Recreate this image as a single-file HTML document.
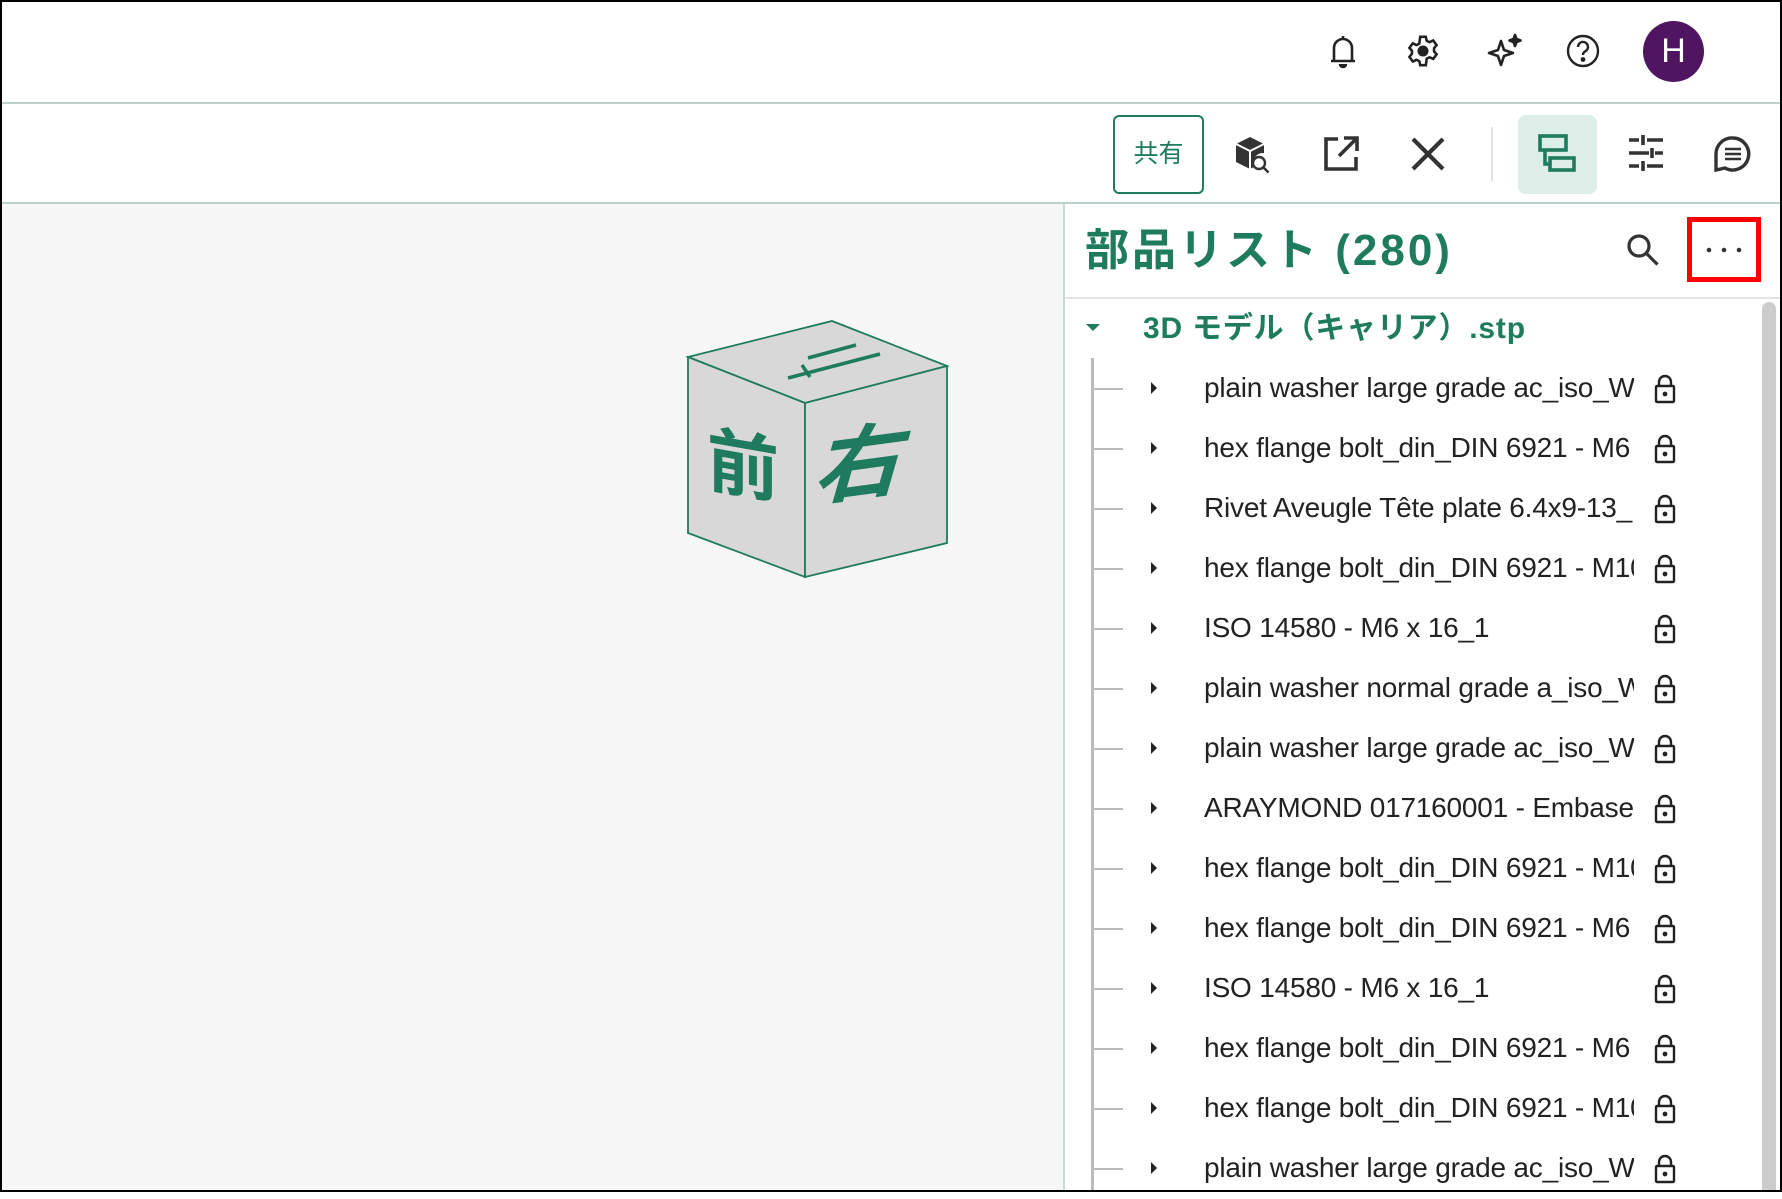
<!DOCTYPE html>
<html><head><meta charset="utf-8"><style>
*{margin:0;padding:0;box-sizing:border-box}
body{width:1782px;height:1192px;overflow:hidden;background:#fff;font-family:"Liberation Sans","Noto Sans CJK JP",sans-serif;position:relative}
.frame{position:absolute;left:0;top:0;width:1782px;height:1192px;border:2px solid #000;z-index:10;pointer-events:none}
.abs{position:absolute}
.hl{position:absolute;left:0;width:1782px;height:2px;background:#b9d3cb}
svg{position:absolute;overflow:visible}
.row{position:absolute;left:1063px;width:700px;height:60px}
.row .dash{position:absolute;left:30px;top:29px;width:30px;height:2px;background:#bbb}
.row .car{position:absolute;left:88px;top:23px;width:0;height:0;border-top:6px solid transparent;border-bottom:6px solid transparent;border-left:6px solid #222}
.row .t{position:absolute;left:141px;top:13px;width:430px;overflow:hidden;white-space:nowrap;font-size:28px;color:#222;letter-spacing:-0.2px}
.row svg{left:590px;top:15px}
</style></head><body>
<div class="frame"></div>
<div class="hl" style="top:102px"></div>
<div class="hl" style="top:202px"></div>
<svg style="left:1328px;top:33px" width="30" height="36" viewBox="0 0 30 36" fill="none" stroke="#222" stroke-width="2.6"><path d="M6 27V15a9 9 0 0 1 18 0v12M3 28h24M15 3v3"/><path d="M12 31a3 3 0 0 0 6 0" fill="#222"/></svg>
<svg style="left:1406px;top:34px" width="34" height="34" viewBox="0 0 24 24" fill="none" stroke="#222" stroke-width="1.8"><path d="M10 2h4l.6 2.8 2 1 2.6-1.2 2.4 3.2-1.8 2.2v2.2l1.8 2.2-2.4 3.2-2.6-1.2-2 1L14 22h-4l-.6-2.8-2-1-2.6 1.2-2.4-3.2 1.8-2.2v-2.2L2.4 9.8l2.4-3.2 2.6 1.2 2-1z"/><circle cx="12" cy="12" r="3" fill="#222"/></svg>
<svg style="left:1487px;top:33px" width="36" height="36" viewBox="0 0 36 36" fill="none" stroke="#222" stroke-width="2.6" stroke-linejoin="round"><path d="M14 8l3 9 9 3-9 3-3 9-3-9-9-3 9-3z"/><path d="M28 2l1.5 4 4 1.5-4 1.5L28 13l-1.5-4-4-1.5 4-1.5z" fill="#222"/></svg>
<svg style="left:1566px;top:34px" width="34" height="34" viewBox="0 0 34 34" fill="none" stroke="#222" stroke-width="2.4"><circle cx="17" cy="17" r="15"/><path d="M12 13a5 5 0 1 1 7 4.5c-1.5.8-2 1.6-2 3.5"/><circle cx="17" cy="25.5" r="1.2" fill="#222"/></svg>
<div class="abs" style="left:1643px;top:21px;width:61px;height:61px;border-radius:50%;background:#4f1560;color:#fff;font-size:34px;text-align:center;line-height:61px">H</div>
<div class="abs" style="left:1113px;top:115px;width:91px;height:79px;border:2px solid #1e7b5e;border-radius:6px;color:#1e7b5e;font-size:25px;text-align:center;line-height:75px">共有</div>
<svg style="left:1234px;top:135px" width="40" height="42" viewBox="0 0 40 42"><path d="M16 2l14 7v9a10 10 0 0 0-10 14l-4 2L2 27V9z" fill="#333"/><path d="M2 9l14 7 14-7M16 16v18" stroke="#fff" stroke-width="2" fill="none"/><circle cx="25" cy="28" r="6" fill="none" stroke="#333" stroke-width="2.4"/><path d="M29.5 32.5l5 5" stroke="#333" stroke-width="2.6"/></svg>
<svg style="left:1322px;top:135px" width="38" height="38" viewBox="0 0 38 38" fill="none" stroke="#333" stroke-width="3.6"><path d="M16 4H4v30h30V22"/><path d="M22 3h13v13M35 3L17 21"/></svg>
<svg style="left:1410px;top:136px" width="36" height="36" viewBox="0 0 36 36" stroke="#333" stroke-width="4.2"><path d="M3 3l30 30M33 3L3 33"/></svg>
<div class="abs" style="left:1491px;top:127px;width:2px;height:54px;background:#e3e3e3"></div>
<div class="abs" style="left:1518px;top:115px;width:79px;height:79px;border-radius:8px;background:#ddeee8"></div>
<svg style="left:1538px;top:134px" width="40" height="40" viewBox="0 0 40 40" fill="none" stroke="#1e7b5e" stroke-width="3.6"><rect x="2" y="2" width="26" height="14"/><rect x="12" y="24" width="24" height="12"/><path d="M7 16v14h5"/></svg>
<svg style="left:1627px;top:134px" width="38" height="38" viewBox="0 0 38 38" stroke="#333" stroke-width="3.6"><path d="M2 6h10M20 6h16M2 19h20M28 19h8M2 32h10M20 32h16M16 1v10M25 14v10M16 27v10"/></svg>
<svg style="left:1714px;top:136px" width="38" height="36" viewBox="0 0 38 36" fill="none" stroke="#333" stroke-width="3.4"><path d="M19 2a16 16 0 1 1-8 30L2 34V18A16 16 0 0 1 19 2z"/><path d="M11 13h16M11 18h16M11 23h16" stroke-width="2.6"/></svg>
<div class="abs" style="left:2px;top:204px;width:1061px;height:986px;background:#f7f7f7"></div>
<svg style="left:0;top:0" width="1782" height="1192">
<polygon points="688,357 832,321 947,366 805,403" fill="#d8d8d8" stroke="#1e7b5e" stroke-width="1.8"/>
<polygon points="688,357 805,403 805,577 688,533" fill="#d8d8d8" stroke="#1e7b5e" stroke-width="1.8"/>
<polygon points="805,403 947,366 947,543 805,577" fill="#d8d8d8" stroke="#1e7b5e" stroke-width="1.8"/>
<text x="707" y="485" font-size="72" fill="#1e7b5e" font-weight="bold" font-family="Noto Sans CJK JP,sans-serif" transform="skewY(10) translate(0,-125)">前</text>
<text x="825" y="505" font-size="84" fill="#1e7b5e" font-weight="bold" font-family="Noto Sans CJK JP,sans-serif" transform="skewX(-16) skewY(-8) translate(130,128)">右</text>
<path d="M788 378l92-24M802 365l8 12M808 358l48-13" stroke="#1e7b5e" stroke-width="3.5" fill="none"/>
</svg>
<div class="abs" style="left:1063px;top:204px;width:2px;height:986px;background:#c7dcd5"></div>
<div class="abs" style="left:1065px;top:297px;width:715px;height:2px;background:#e4e4e4"></div>
<div class="abs" style="left:1085px;top:214px;font-size:44px;color:#1e7b5e;font-weight:bold;letter-spacing:3px">部品リスト (280)</div>
<svg style="left:1626px;top:233px" width="34" height="34" viewBox="0 0 34 34" fill="none" stroke="#333" stroke-width="3.2"><circle cx="13" cy="13" r="10"/><path d="M20.5 20.5l11 11"/></svg>
<div class="abs" style="left:1687px;top:217px;width:74px;height:65px;border:5px solid #f00"></div>
<svg style="left:1706px;top:247px" width="36" height="6"><circle cx="3" cy="3" r="2.3" fill="#333"/><circle cx="18" cy="3" r="2.3" fill="#333"/><circle cx="33" cy="3" r="2.3" fill="#333"/></svg>
<div class="abs" style="left:1762px;top:302px;width:14px;height:888px;background:#ccc;border-radius:7px 7px 0 0"></div>
<div class="abs" style="left:1086px;top:324px;border-left:7px solid transparent;border-right:7px solid transparent;border-top:7px solid #1e7b5e"></div>
<div class="abs" style="left:1143px;top:303px;font-size:30px;color:#1e7b5e;font-weight:bold;letter-spacing:0.8px">3D モデル（キャリア）.stp</div>
<div class="abs" style="left:1091px;top:358px;width:3px;height:834px;background:#bbb"></div>
<div class="row" style="top:359px"><div class="dash"></div><div class="car"></div><div class="t">plain washer large grade ac_iso_W16</div><svg width="24" height="30" viewBox="0 0 24 30" fill="none" stroke="#222" stroke-width="2.4"><path d="M6 12V8a6 6 0 0 1 12 0v4"/><rect x="3" y="12" width="18" height="16" rx="1"/><circle cx="12" cy="20" r="1.2" fill="#222"/></svg></div>
<div class="row" style="top:419px"><div class="dash"></div><div class="car"></div><div class="t">hex flange bolt_din_DIN 6921 - M6</div><svg width="24" height="30" viewBox="0 0 24 30" fill="none" stroke="#222" stroke-width="2.4"><path d="M6 12V8a6 6 0 0 1 12 0v4"/><rect x="3" y="12" width="18" height="16" rx="1"/><circle cx="12" cy="20" r="1.2" fill="#222"/></svg></div>
<div class="row" style="top:479px"><div class="dash"></div><div class="car"></div><div class="t">Rivet Aveugle Tête plate 6.4x9-13_1</div><svg width="24" height="30" viewBox="0 0 24 30" fill="none" stroke="#222" stroke-width="2.4"><path d="M6 12V8a6 6 0 0 1 12 0v4"/><rect x="3" y="12" width="18" height="16" rx="1"/><circle cx="12" cy="20" r="1.2" fill="#222"/></svg></div>
<div class="row" style="top:539px"><div class="dash"></div><div class="car"></div><div class="t">hex flange bolt_din_DIN 6921 - M10</div><svg width="24" height="30" viewBox="0 0 24 30" fill="none" stroke="#222" stroke-width="2.4"><path d="M6 12V8a6 6 0 0 1 12 0v4"/><rect x="3" y="12" width="18" height="16" rx="1"/><circle cx="12" cy="20" r="1.2" fill="#222"/></svg></div>
<div class="row" style="top:599px"><div class="dash"></div><div class="car"></div><div class="t">ISO 14580 - M6 x 16_1</div><svg width="24" height="30" viewBox="0 0 24 30" fill="none" stroke="#222" stroke-width="2.4"><path d="M6 12V8a6 6 0 0 1 12 0v4"/><rect x="3" y="12" width="18" height="16" rx="1"/><circle cx="12" cy="20" r="1.2" fill="#222"/></svg></div>
<div class="row" style="top:659px"><div class="dash"></div><div class="car"></div><div class="t">plain washer normal grade a_iso_W6</div><svg width="24" height="30" viewBox="0 0 24 30" fill="none" stroke="#222" stroke-width="2.4"><path d="M6 12V8a6 6 0 0 1 12 0v4"/><rect x="3" y="12" width="18" height="16" rx="1"/><circle cx="12" cy="20" r="1.2" fill="#222"/></svg></div>
<div class="row" style="top:719px"><div class="dash"></div><div class="car"></div><div class="t">plain washer large grade ac_iso_W16</div><svg width="24" height="30" viewBox="0 0 24 30" fill="none" stroke="#222" stroke-width="2.4"><path d="M6 12V8a6 6 0 0 1 12 0v4"/><rect x="3" y="12" width="18" height="16" rx="1"/><circle cx="12" cy="20" r="1.2" fill="#222"/></svg></div>
<div class="row" style="top:779px"><div class="dash"></div><div class="car"></div><div class="t">ARAYMOND 017160001 - Embase</div><svg width="24" height="30" viewBox="0 0 24 30" fill="none" stroke="#222" stroke-width="2.4"><path d="M6 12V8a6 6 0 0 1 12 0v4"/><rect x="3" y="12" width="18" height="16" rx="1"/><circle cx="12" cy="20" r="1.2" fill="#222"/></svg></div>
<div class="row" style="top:839px"><div class="dash"></div><div class="car"></div><div class="t">hex flange bolt_din_DIN 6921 - M10</div><svg width="24" height="30" viewBox="0 0 24 30" fill="none" stroke="#222" stroke-width="2.4"><path d="M6 12V8a6 6 0 0 1 12 0v4"/><rect x="3" y="12" width="18" height="16" rx="1"/><circle cx="12" cy="20" r="1.2" fill="#222"/></svg></div>
<div class="row" style="top:899px"><div class="dash"></div><div class="car"></div><div class="t">hex flange bolt_din_DIN 6921 - M6</div><svg width="24" height="30" viewBox="0 0 24 30" fill="none" stroke="#222" stroke-width="2.4"><path d="M6 12V8a6 6 0 0 1 12 0v4"/><rect x="3" y="12" width="18" height="16" rx="1"/><circle cx="12" cy="20" r="1.2" fill="#222"/></svg></div>
<div class="row" style="top:959px"><div class="dash"></div><div class="car"></div><div class="t">ISO 14580 - M6 x 16_1</div><svg width="24" height="30" viewBox="0 0 24 30" fill="none" stroke="#222" stroke-width="2.4"><path d="M6 12V8a6 6 0 0 1 12 0v4"/><rect x="3" y="12" width="18" height="16" rx="1"/><circle cx="12" cy="20" r="1.2" fill="#222"/></svg></div>
<div class="row" style="top:1019px"><div class="dash"></div><div class="car"></div><div class="t">hex flange bolt_din_DIN 6921 - M6</div><svg width="24" height="30" viewBox="0 0 24 30" fill="none" stroke="#222" stroke-width="2.4"><path d="M6 12V8a6 6 0 0 1 12 0v4"/><rect x="3" y="12" width="18" height="16" rx="1"/><circle cx="12" cy="20" r="1.2" fill="#222"/></svg></div>
<div class="row" style="top:1079px"><div class="dash"></div><div class="car"></div><div class="t">hex flange bolt_din_DIN 6921 - M10</div><svg width="24" height="30" viewBox="0 0 24 30" fill="none" stroke="#222" stroke-width="2.4"><path d="M6 12V8a6 6 0 0 1 12 0v4"/><rect x="3" y="12" width="18" height="16" rx="1"/><circle cx="12" cy="20" r="1.2" fill="#222"/></svg></div>
<div class="row" style="top:1139px"><div class="dash"></div><div class="car"></div><div class="t">plain washer large grade ac_iso_W16</div><svg width="24" height="30" viewBox="0 0 24 30" fill="none" stroke="#222" stroke-width="2.4"><path d="M6 12V8a6 6 0 0 1 12 0v4"/><rect x="3" y="12" width="18" height="16" rx="1"/><circle cx="12" cy="20" r="1.2" fill="#222"/></svg></div>
</body></html>
